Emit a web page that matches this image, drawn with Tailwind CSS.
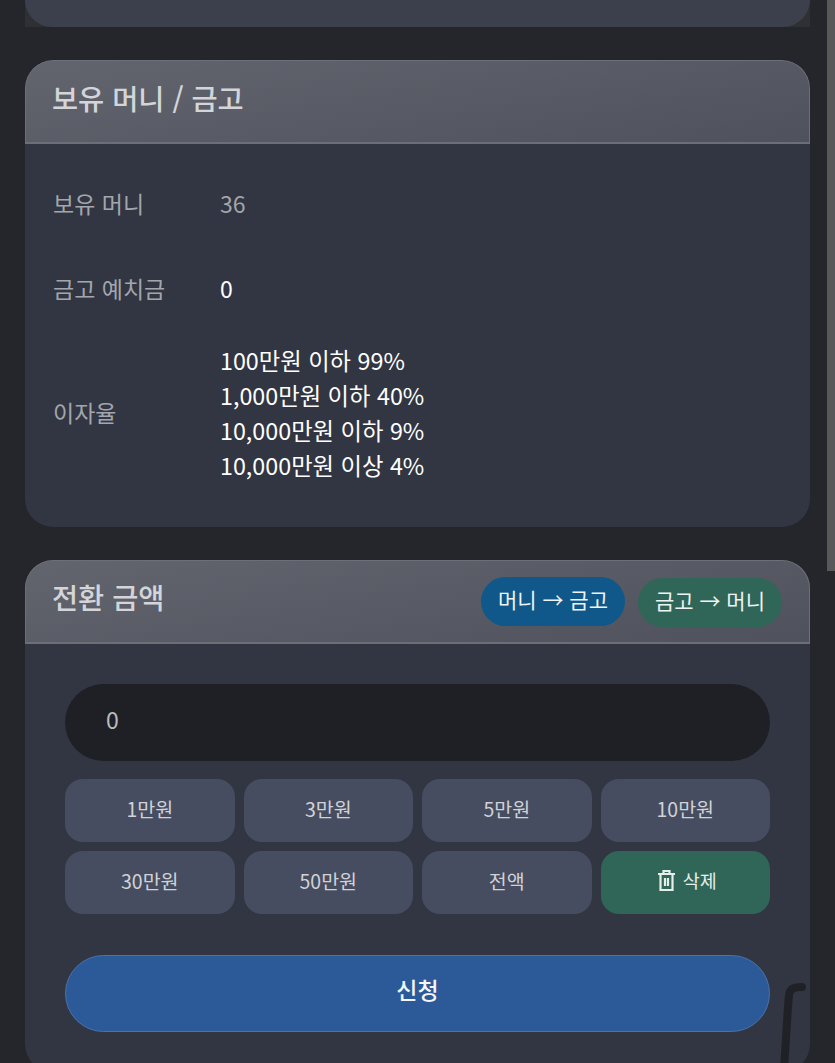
<!DOCTYPE html>
<html lang="ko">
<head>
    <meta charset="UTF-8">
    <meta name="viewport" content="width=device-width, initial-scale=1.0">
    <title>보유 머니 / 금고</title>
    <script src="https://cdn.jsdelivr.net/npm/@tailwindcss/browser@4"></script>
</head>
<body class="bg-[#25262b]">
    <div class="relative h-[1063px] w-[835px] overflow-hidden font-['Noto_Sans_CJK_KR','Noto_Sans',sans-serif]">
        <!-- scrollbar -->
        <div class="absolute right-0 top-0 h-[571px] w-[8px] bg-[#57585a]"></div>

        <div class="flex w-[785px] ml-[25px] flex-col">
            <!-- previous card, cut off by the top of the screen -->
            <div class="h-[27px] bg-[#2f3034]">
                <div class="h-[27px] rounded-b-[27px] bg-[#3c404c]"></div>
            </div>

            <!-- balance card -->
            <section class="mt-[33px] h-[467px] overflow-hidden rounded-[28px] bg-[#313642]">
                <header class="flex h-[84px] items-center rounded-t-[28px] border border-b-2 border-[#6c6f78] bg-linear-[170deg] from-[#62656e] to-[#4f525c] px-[26px] pb-[6px]">
                    <h2 class="text-[28.4px] font-medium text-[#d3d5d9]">보유 머니 / 금고</h2>
                </header>
                <div class="flex flex-col px-[28px] text-[23px]">
                    <div class="flex h-[84px] mt-[17px] items-center">
                        <div class="w-[167px] text-[#a3a6ad]">보유 머니</div>
                        <div class="text-[#a3a6ad]">36</div>
                    </div>
                    <div class="flex h-[84px] mt-[1px] items-center">
                        <div class="w-[167px] text-[#a3a6ad]">금고 예치금</div>
                        <div class="text-white">0</div>
                    </div>
                    <div class="flex items-center mt-[13px]">
                        <div class="w-[167px] pb-[2px] text-[#a3a6ad]">이자율</div>
                        <div class="text-[23.3px] text-white leading-[35px]">
                            <p>100만원 이하 99%</p>
                            <p>1,000만원 이하 40%</p>
                            <p>10,000만원 이하 9%</p>
                            <p>10,000만원 이상 4%</p>
                        </div>
                    </div>
                </div>
            </section>

            <!-- exchange card -->
            <section class="mt-[33px] h-[512px] rounded-[28px] bg-[#313642]">
                <header class="flex h-[84px] items-center justify-between rounded-t-[28px] border border-b-2 border-[#6c6f78] bg-linear-[170deg] from-[#62656e] to-[#4f525c] pl-[26px] pr-[27px]">
                    <h2 class="text-[28.4px] font-medium text-[#d3d5d9] mb-[8px]">전환 금액</h2>
                    <div class="flex gap-[13px] pt-[1px]">
                        <button class="flex h-[49px] w-[144px] items-center justify-center rounded-full bg-[#10578a] pb-[3px] text-[21px] text-[#eef3f5]">머니 → 금고</button>
                        <button class="mt-[1px] flex h-[49px] w-[144px] items-center justify-center rounded-full bg-[#2f6658] pb-[3px] text-[21px] text-[#eef3f5]">금고 → 머니</button>
                    </div>
                </header>
                <div class="px-[40px] pt-[40px]">
                    <div class="flex h-[77px] items-center rounded-full bg-[#1f2025] px-[41px] pb-[6px] text-[23px] text-[#b9bbc0]">0</div>
                    <div class="mt-[18px] grid grid-cols-4 gap-x-[9px] gap-y-[9px] text-[19.5px] text-[#d0d2d8]">
                        <button class="h-[63px] rounded-[18px] bg-[#474d60] pb-[4px]">1만원</button>
                        <button class="h-[63px] rounded-[18px] bg-[#474d60] pb-[4px]">3만원</button>
                        <button class="h-[63px] rounded-[18px] bg-[#474d60] pb-[4px]">5만원</button>
                        <button class="h-[63px] rounded-[18px] bg-[#474d60] pb-[4px]">10만원</button>
                        <button class="h-[63px] rounded-[18px] bg-[#474d60] pb-[4px]">30만원</button>
                        <button class="h-[63px] rounded-[18px] bg-[#474d60] pb-[4px]">50만원</button>
                        <button class="h-[63px] rounded-[18px] bg-[#474d60] pb-[4px]">전액</button>
                        <button class="flex h-[63px] items-center justify-center gap-[8px] rounded-[18px] bg-[#2f6658] pb-[4px] pl-[4px] text-[#e6eeec]">
                            <svg class="h-[21px] w-[17px]" viewBox="0 0 17 21" fill="none" stroke="currentColor" stroke-width="2.200">
                                <path d="M0 4h17M5.500 4V1h6v3M2.500 4v16h12V4M7 8v8M10 8v8"/>
                            </svg>
                            <span class="text-[18.500px]">삭제</span>
                        </button>
                    </div>
                    <button class="mt-[41px] h-[77px] w-full rounded-full border border-[#4a72ab] bg-[#2c5a98] pb-[8px] text-[23px] font-medium text-[#f2f5f9]">신청</button>
                </div>
            </section>
        </div>

        <!-- pen mark over the bottom right corner -->
        <svg class="absolute left-[775px] top-[978px] h-[85px] w-[35px]" viewBox="0 0 35 85" fill="none" stroke="#202126" stroke-width="8" stroke-linecap="round">
            <path d="M27 9C20 9 15 10 14 17C12 38 11 65 9 90"/>
        </svg>
    </div>
</body>
</html>
